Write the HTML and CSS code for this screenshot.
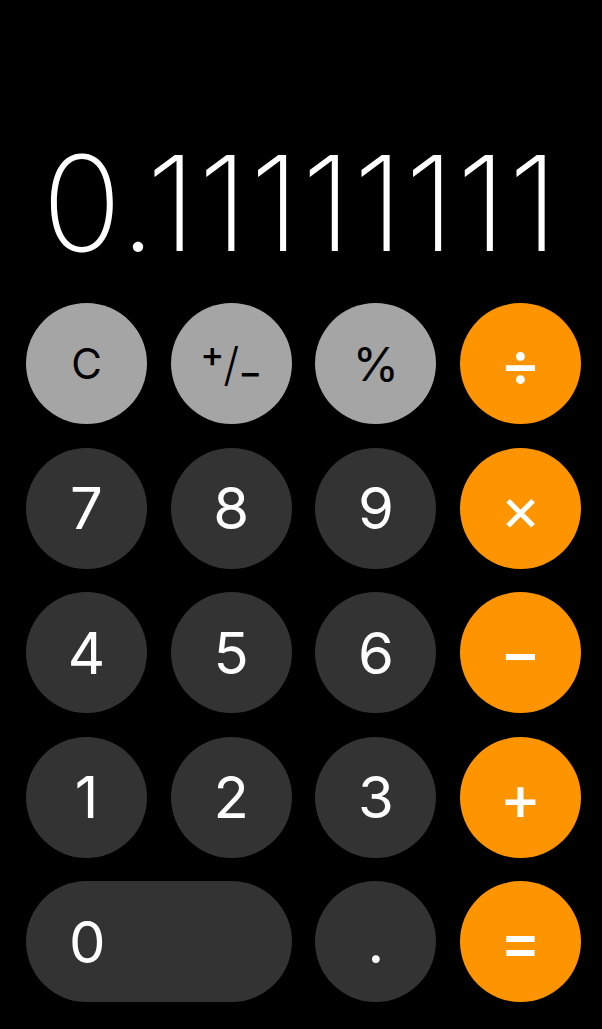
FILE: index.html
```html
<!DOCTYPE html>
<html lang="en">
    <head>
        <meta charset="UTF-8" />
        <meta name="viewport" content="width=device-width, initial-scale=1.0" />
        <title>Calculator</title>
        <link rel="stylesheet" href="styles.css">
    </head>
    <body>
        <main class="calculator">
            <section class="display">
                <div class="result">0.11111111</div>
            </section>

            <section class="keypad">
                <button class="key function">C</button>
                <button class="key function sign">
                    <span class="sign-plus">+</span><span class="sign-slash">/</span><span class="sign-minus">−</span>
                </button>
                <button class="key function percent">%</button>
                <button class="key operator">÷</button>

                <button class="key digit">7</button>
                <button class="key digit">8</button>
                <button class="key digit">9</button>
                <button class="key operator times">×</button>

                <button class="key digit">4</button>
                <button class="key digit">5</button>
                <button class="key digit">6</button>
                <button class="key operator">−</button>

                <button class="key digit">1</button>
                <button class="key digit">2</button>
                <button class="key digit">3</button>
                <button class="key operator">+</button>

                <button class="key digit zero">0</button>
                <button class="key digit">.</button>
                <button class="key operator">=</button>
            </section>
        </main>
    </body>
</html>
```

FILE: styles.css
```css
body {
    margin: 0;
    padding: 0;
    background-color: #000;
    color: #fff;
    font-family: Inter, "Noto Sans", sans-serif;
}

.calculator {
    padding: 0 21px 0 26px;
}

.display {
    display: flex;
    justify-content: flex-end;
    align-items: flex-end;
    height: 269px;
    padding-right: 21px;
}

.result {
    font-size: 132px;
    font-weight: 200;
    line-height: 1;
    letter-spacing: 1.5px;
    white-space: nowrap;
}

.keypad {
    display: grid;
    grid-template-columns: repeat(4, 121px);
    grid-auto-rows: 121px;
    gap: 23.5px 23.7px;
    margin-top: 34px;
}

.key {
    display: flex;
    align-items: center;
    justify-content: center;
    margin: 0;
    padding: 0;
    border: none;
    border-radius: 61px;
    font-family: inherit;
    font-size: 58px;
    font-weight: 400;
    color: #fff;
    cursor: pointer;
}

.digit {
    background-color: #333333;
}

.function {
    background-color: #a5a5a5;
    color: #000;
    font-size: 42px;
}

.percent {
    font-size: 47px;
}

.operator {
    background-color: #fe9500;
    font-size: 62px;
    font-weight: 500;
}

.times {
    font-weight: 400;
}

.zero {
    grid-column: span 2;
    justify-content: flex-start;
    padding-left: 43px;
}

.sign span {
    line-height: 1;
}

.sign-slash {
    font-size: 46px;
    font-weight: 300;
}

.sign-plus,
.sign-minus {
    font-size: 36px;
    font-weight: 500;
}

.sign-plus {
    margin-right: -1px;
    transform: translateY(-10px);
}

.sign-minus {
    margin-left: -1px;
    transform: translateY(8px);
}
```
